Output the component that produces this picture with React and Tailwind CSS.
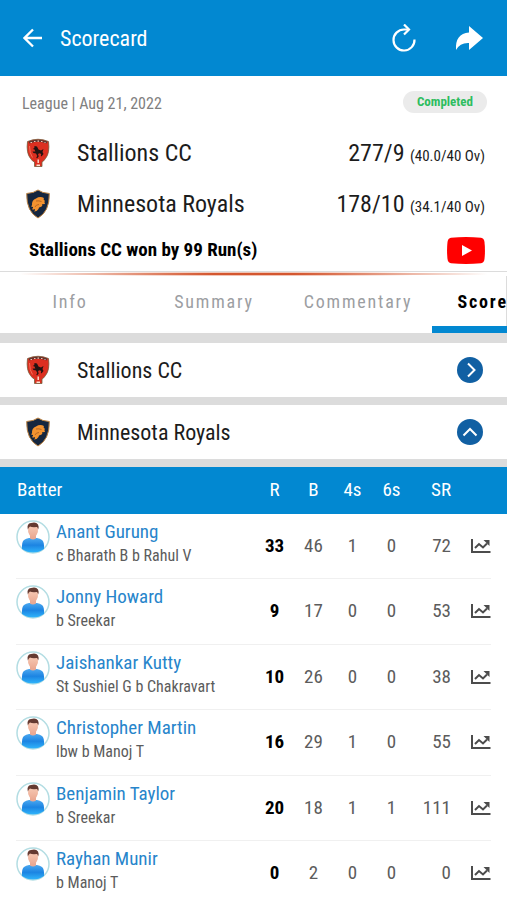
import React, { useState } from 'react';

const teams = [
    { id: 'stallions', name: 'Stallions CC', score: '277/9', overs: '(40.0/40 Ov)' },
    { id: 'royals', name: 'Minnesota Royals', score: '178/10', overs: '(34.1/40 Ov)' },
];

const tabs = ['Info', 'Summary', 'Commentary', 'Scorecard'];

const batters = [
    { name: 'Anant Gurung', out: 'c Bharath B b Rahul V', r: 33, b: 46, fours: 1, sixes: 0, sr: 72 },
    { name: 'Jonny Howard', out: 'b Sreekar', r: 9, b: 17, fours: 0, sixes: 0, sr: 53 },
    { name: 'Jaishankar Kutty', out: 'St Sushiel G b Chakravart', r: 10, b: 26, fours: 0, sixes: 0, sr: 38 },
    { name: 'Christopher Martin', out: 'lbw b Manoj T', r: 16, b: 29, fours: 1, sixes: 0, sr: 55 },
    { name: 'Benjamin Taylor', out: 'b Sreekar', r: 20, b: 18, fours: 1, sixes: 1, sr: 111 },
    { name: 'Rayhan Munir', out: 'b Manoj T', r: 0, b: 2, fours: 0, sixes: 0, sr: 0 },
];

const StallionsLogo = () => (
    <svg viewBox="0 0 24 30" className="h-[30px] w-6 shrink-0" aria-hidden="true">
        <path d="M1.500 3.500Q12-1 22.500 3.500Q24 15 19.500 20.500Q17.500 23.500 16 24V28.500H8.500V24Q6.500 23.500 4.500 20.500Q0 15 1.500 3.500Z" fill="#dc2f20" stroke="#75603f" strokeWidth="0.800" />
        <path d="M3 4.500Q12 1 21 4.500" stroke="#5c3630" strokeWidth="2.200" fill="none" />
        <path d="M4.500 4.500h1.500M8 3.500h1.500M11.500 3.200h1.500M15 3.500h1.500M18.500 4.500h1" stroke="#f0c3b4" strokeWidth="1.200" />
        <path d="M8.500 8L11 8.500L12.500 11.500L15 12.500L17.500 11L16.500 14L17.500 16L15.500 18.500L14.800 17.500L15.300 16L13.500 15.200L12 16L12.700 18.500L11 20.500L10.300 19.500L11.300 18L10 15.500L7.500 15L6.500 13.500L9.300 13.500L8.500 11.500L6.800 11L8.300 10Z" fill="#231312" />
        <path d="M12.200 21.500v3.500M10.500 27.300h3.500" stroke="#fbe3d2" strokeWidth="1.400" />
        <path d="M3.500 8Q3.500 15.500 6.500 19.500" stroke="#f2705a" strokeWidth="1" fill="none" />
    </svg>
);

const RoyalsLogo = () => (
    <svg viewBox="0 0 24 30" className="h-[30px] w-6 shrink-0" aria-hidden="true">
        <path d="M12 1Q16 4 23.300 4.500Q23.500 14 20.500 20Q17.500 26 12 29Q6.500 26 3.500 20Q.5 14 .7 4.500Q8 4 12 1Z" fill="#15263f" stroke="#bd8342" strokeWidth="1" />
        <path d="M6 16.500Q5.500 11 10 9.500Q14 7 18 9L17.500 10.200Q19.500 11.500 18.500 13.500L19 15L16 15.300Q17 17.500 14.500 18Q12.500 18 12.500 20Q11 22.500 8 22.500Q9.500 21 9 20Q7 21 6 20Q7.500 19 7 18Q5.500 18 5 17Z" fill="#f3922f" />
        <path d="M10 12Q13 11.500 15.500 12.500M9 18Q10 15.500 13 15.500" stroke="#a85c22" strokeWidth="0.800" fill="none" />
    </svg>
);

const TeamLogo = ({ id }) => (id === 'stallions' ? <StallionsLogo /> : <RoyalsLogo />);

const Avatar = () => (
    <svg viewBox="0 0 34 34" className="h-[34px] w-[34px] shrink-0" aria-hidden="true">
        <defs>
            <linearGradient id="shirt" x1="0" y1="0" x2="0" y2="1">
                <stop offset="0" stopColor="#4ba8f0" />
                <stop offset="0.5" stopColor="#1c84e2" />
                <stop offset="1" stopColor="#2fb4fb" />
            </linearGradient>
            <linearGradient id="skin" x1="0" y1="0" x2="0" y2="1">
                <stop offset="0" stopColor="#f8cdb8" />
                <stop offset="1" stopColor="#eba992" />
            </linearGradient>
        </defs>
        <circle cx="17" cy="17" r="16" fill="#fff" stroke="#b3dde3" strokeWidth="1.500" />
        <path d="M6 29Q5.500 22 8 20Q10 18.500 13 18H21Q24 18.500 26 20Q28.500 22 28 29Q23 32.500 17 32.500Q11 32.500 6 29Z" fill="url(#shirt)" />
        <path d="M14 14V18.500Q17 20.500 20 18.500V14Z" fill="#e9a994" />
        <path d="M12 8Q12 4 17 4Q22 4 22 8Q22.500 12 20.500 15Q19 17.500 17 17.500Q15 17.500 13.500 15Q11.500 12 12 8Z" fill="url(#skin)" />
        <path d="M11.800 9.500Q10.500 3.500 15 3Q20 1.500 22 4.500Q23 6 22.200 9.500Q21.800 7.500 21 7Q16 7.500 14 6.500Q12.500 7.500 11.800 9.500Z" fill="#643a31" />
    </svg>
);

const ChartIcon = () => (
    <svg viewBox="0 0 20 15" className="h-[15px] w-5" fill="none" stroke="#4c4c4c" aria-hidden="true">
        <path d="M1 0V13H19.500" strokeWidth="2" />
        <path d="M4 9L8 5L12 8.500L16 4.500" strokeWidth="2" />
        <path d="M12.500 1H18.500V7Z" fill="#4c4c4c" stroke="none" />
    </svg>
);

const TeamAccordion = ({ team, open, onToggle }) => (
    <button
        onClick={onToggle}
        aria-expanded={open}
        className="flex h-[54px] w-full items-center bg-white pr-6 pl-[26px] text-left"
    >
        <TeamLogo id={team.id} />
        <span className="ml-[27px] flex-1 text-[22px] text-[#1c1c1c]">{team.name}</span>
        <svg viewBox="0 0 26 26" className="h-[26px] w-[26px]" fill="none" stroke="#fff" strokeWidth="2" aria-hidden="true">
            <circle cx="13" cy="13" r="13" fill="#1160a3" stroke="none" />
            {open ? <path d="M6.500 16.500L13 10L19.500 16.500" /> : <path d="M11 6.500L17.500 13L11 19.500" />}
        </svg>
    </button>
);

const rowGrid = 'mx-4 grid grid-cols-[1fr_39px_39px_39px_39px_40px_40px] items-center';

const BattingTable = () => (
    <table className="block text-[19px] text-[#5c5c5c]">
        <thead className="block bg-[#0288d1] text-white">
            <tr className={`${rowGrid} h-[47px]`}>
                <th className="pl-px text-left font-normal">Batter</th>
                <th className="font-normal">R</th>
                <th className="font-normal">B</th>
                <th className="font-normal">4s</th>
                <th className="font-normal">6s</th>
                <th className="text-right font-normal">SR</th>
                <td />
            </tr>
        </thead>
        <tbody className="block">
            {batters.map((p) => (
                <tr key={p.name} className={`${rowGrid} border-b border-[#f0f0f0] odd:h-[65px] even:h-[66px]`}>
                    <td className="flex gap-[6px] self-start pt-[6px]">
                        <Avatar />
                        <div className="whitespace-nowrap">
                            <a href="#" className="block leading-6 text-[#2785cb]">{p.name}</a>
                            <p className="text-base leading-6">{p.out}</p>
                        </div>
                    </td>
                    <td className="text-center font-bold text-black">{p.r}</td>
                    <td className="text-center">{p.b}</td>
                    <td className="text-center">{p.fours}</td>
                    <td className="text-center">{p.sixes}</td>
                    <td className="text-right">{p.sr}</td>
                    <td className="flex justify-end">
                        <button aria-label={`${p.name} chart`}>
                            <ChartIcon />
                        </button>
                    </td>
                </tr>
            ))}
        </tbody>
    </table>
);

const App = () => {
    const [activeTab, setActiveTab] = useState('Scorecard');
    const [openTeam, setOpenTeam] = useState('royals');

    return (
        <div className="h-screen overflow-hidden bg-white font-['Roboto_Condensed','Liberation_Sans_Narrow',sans-serif]">
            <header className="flex h-[76px] items-center bg-[#0288d1] pr-6 pl-[23px] text-white">
                <button aria-label="Back">
                    <svg viewBox="0 0 20 20" className="h-5 w-5" fill="none" stroke="currentColor" strokeWidth="2.300">
                        <path d="M19 10H2M10 1.500L1.500 10L10 18.500" />
                    </svg>
                </button>
                <h1 className="ml-[17px] flex-1 text-[22px]">Scorecard</h1>
                <button aria-label="Refresh">
                    <svg viewBox="0 0 24 28" className="h-7 w-6" fill="none" stroke="currentColor" strokeWidth="2.200">
                        <path d="M22.500 15.500A10.500 10.500 0 1 1 12 5.500H17" />
                        <path d="M12 0.500L17 5.500L12 10.500" />
                    </svg>
                </button>
                <button aria-label="Share" className="ml-[39px]">
                    <svg viewBox="0 0 28 24" className="h-6 w-7" fill="currentColor">
                        <path d="M14 0L28 12L14 24V17Q5 16.500 1 24Q0 7.500 14 6.500Z" />
                    </svg>
                </button>
            </header>

            <section className="border-b border-[#dcdcdc]">
                <div className="flex h-[51px] items-center justify-between pr-5 pl-[22px]">
                    <p className="pt-1 text-base text-[#808080]">League | Aug 21, 2022</p>
                    <span className="rounded-full bg-[#ebebeb] px-[14px] text-[13px] leading-[22px] font-bold text-[#2dbd5f]">Completed</span>
                </div>
                {teams.map((team) => (
                    <div key={team.id} className="flex h-[51px] items-center pr-[22px] pl-[26px] text-2xl text-[#1c1c1c]">
                        <TeamLogo id={team.id} />
                        <span className="ml-[27px] flex-1">{team.name}</span>
                        <span>
                            {team.score} <span className="text-[15px]">{team.overs}</span>
                        </span>
                    </div>
                ))}
                <div className="flex h-[42px] items-center justify-between pr-[22px] pl-[29px]">
                    <p className="text-[19px] font-bold text-black">Stallions CC won by 99 Run(s)</p>
                    <a href="#" aria-label="Watch on YouTube">
                        <svg viewBox="0 0 38 27" className="h-[27px] w-[38px]">
                            <path d="M4 .8Q19-.6 34 .8Q37 1.200 37.500 5Q38.400 13.500 37.500 22Q37 25.800 34 26.200Q19 27.600 4 26.200Q1 25.800 .5 22Q-.4 13.500 .5 5Q1 1.200 4 .8Z" fill="#f00" />
                            <path d="M15 8L25 13.500L15 19Z" fill="#fff" />
                        </svg>
                    </a>
                </div>
            </section>

            <nav className="overflow-hidden">
                <div className="mx-3 h-1 bg-radial-[closest-side] from-[#d4572f] from-30% to-transparent" />
                <div className="flex h-[57px] border-r border-[#dcdcdc]">
                    {tabs.map((tab) => (
                        <button
                            key={tab}
                            onClick={() => setActiveTab(tab)}
                            className={`w-36 shrink-0 border-b-[7px] pt-px pr-1 text-lg tracking-widest ${
                                activeTab === tab ? 'border-[#0288d1] font-bold text-black' : 'border-transparent text-[#9c9ea2]'
                            }`}
                        >
                            {tab}
                        </button>
                    ))}
                </div>
            </nav>

            <main className="bg-[#dcdcdc] pt-[10px]">
                {teams.map((team) => (
                    <div key={team.id} className="mb-2">
                        <TeamAccordion
                            team={team}
                            open={openTeam === team.id}
                            onToggle={() => setOpenTeam(openTeam === team.id ? null : team.id)}
                        />
                    </div>
                ))}
                <div className="bg-white">
                    <BattingTable />
                </div>
            </main>
        </div>
    );
};

export default App;
